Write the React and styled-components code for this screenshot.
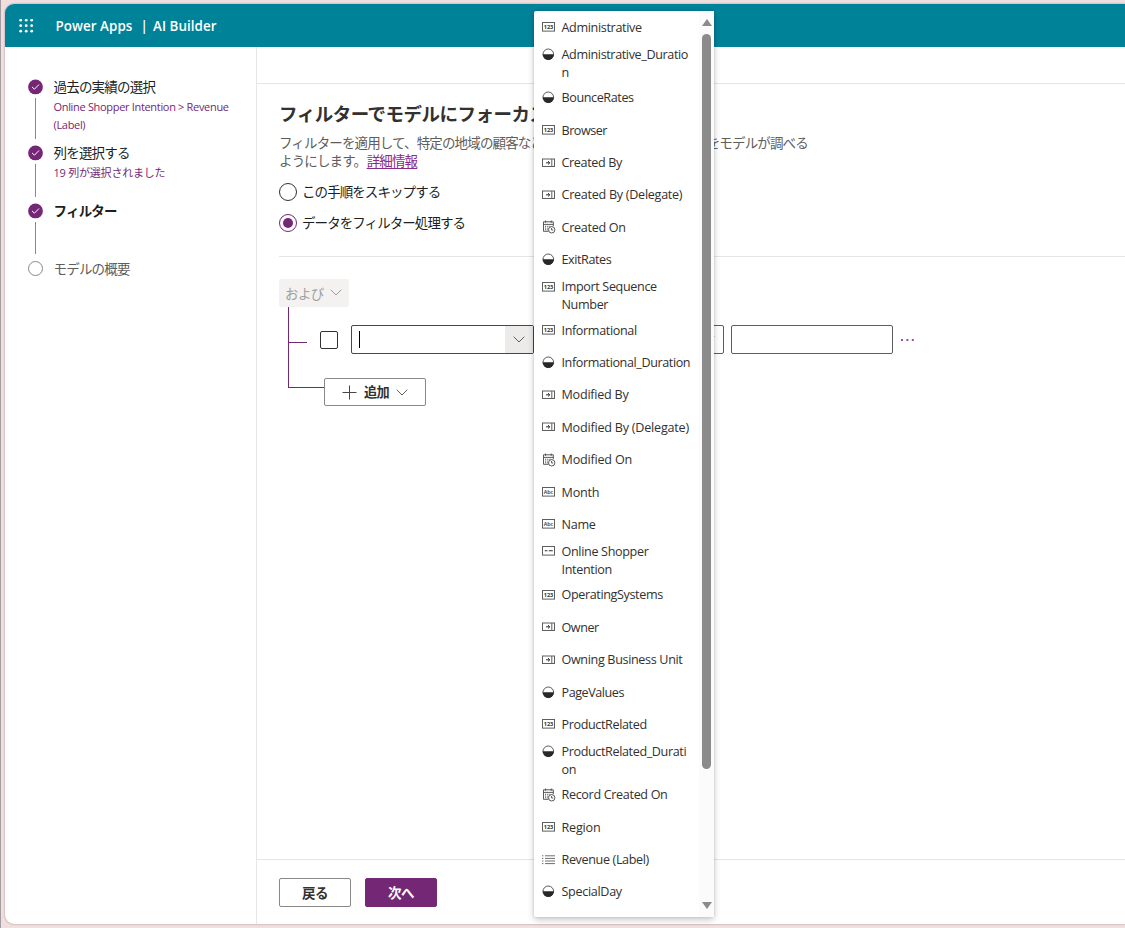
import React from "react";
import styled, { createGlobalStyle, css } from "styled-components";

const GlobalStyle = createGlobalStyle`
  *, *::before, *::after { box-sizing: border-box; }
  html, body { margin: 0; padding: 0; overflow: hidden; }
  body {
    font-family: "Open Sans", "Noto Sans CJK JP", sans-serif;
    color: #323130;
    background: #efdfde;
  }
`;

const Desktop = styled.div`
  width: 1125px;
  height: 928px;
  padding: 4px 0 4px 4px;
  border-left: 1px solid #a39ca3;
  background: #efdfde;
  overflow: hidden;
`;

const Window = styled.div`
  height: 920px;
  display: flex;
  flex-direction: column;
  background: #fff;
  border-radius: 9px 0 0 9px;
  overflow: hidden;
  box-shadow: 0 0 2px rgba(90, 50, 50, 0.5);
`;

const Header = styled.header`
  flex: none;
  height: 43px;
  display: flex;
  align-items: center;
  padding: 1px 0 0 14px;
  background: #008299;
  color: #fff;
`;

const Brand = styled.div`
  display: flex;
  margin-left: 21.5px;
  font-size: 13.4px;
  font-weight: 600;
  line-height: 20px;
  white-space: pre;
`;

const BrandPart = styled.span`
  width: ${(p) => p.$w}px;
  letter-spacing: 0.05px;
`;

const Body = styled.div`
  flex: 1;
  display: flex;
  min-height: 0;
`;

const Sidebar = styled.nav`
  width: 252px;
  flex: none;
  padding: 32px 0 0 23px;
  border-right: 1px solid #e6e6e6;
`;

const Step = styled.div`
  display: flex;
  height: ${(p) => p.$h}px;
`;

const Marker = styled.div`
  width: 15px;
  display: flex;
  flex-direction: column;
  align-items: center;
`;

const StepIcon = styled.svg`
  flex: none;
  width: 15px;
  height: 16px;
`;

const Connector = styled.div`
  width: 1px;
  height: ${(p) => p.$h}px;
  margin-top: 3px;
  background: #8a8886;
`;

const StepText = styled.div`
  margin-left: 10.5px;
  margin-top: -2px;
`;

const StepTitle = styled.div`
  font-size: 13.5px;
  line-height: 20px;
  letter-spacing: -0.8px;
  font-weight: ${(p) => (p.$current ? 700 : 400)};
  color: ${(p) => (p.$muted ? "#605e5c" : "#201f1e")};
  white-space: nowrap;
`;

const StepNote = styled.div`
  width: 190px;
  margin-top: 1px;
  font-size: 11px;
  line-height: 18px;
  letter-spacing: ${(p) => p.$track || 0}px;
  color: #742774;
  white-space: pre-line;
`;

const Main = styled.main`
  flex: 1;
  display: flex;
  flex-direction: column;
  min-width: 0;
`;

const CommandBar = styled.div`
  height: 37px;
  flex: none;
  border-bottom: 1px solid #e6e6e6;
`;

const Content = styled.section`
  flex: 1;
  padding: 18px 0 0 22px;
`;

const Title = styled.h1`
  margin: 0;
  font-size: 18.5px;
  line-height: 24px;
  font-weight: 700;
  letter-spacing: -0.5px;
  white-space: nowrap;
  color: #323130;
`;

const Description = styled.p`
  margin: 8px 0 0;
  font-size: 13.5px;
  line-height: 18px;
  letter-spacing: -0.86px;
  white-space: pre;
  color: #605e5c;
`;

const Link = styled.a`
  margin-left: 0.5px;
  color: #8a2a8a;
  text-decoration: underline;
  text-underline-offset: 2px;
`;

const Radio = styled.label`
  display: flex;
  align-items: center;
  height: 18px;
  margin-top: 13px;
  font-size: 13.5px;
  letter-spacing: -0.93px;
  white-space: nowrap;
  color: #201f1e;
`;

const RadioLabel = styled.span`
  padding-bottom: 2px;
`;

const RadioRing = styled.span`
  width: 18px;
  height: 18px;
  flex: none;
  display: grid;
  place-items: center;
  margin-right: 5px;
  border: 1px solid ${(p) => (p.$on ? "#742774" : "#323130")};
  border-radius: 50%;
`;

const RadioDot = styled.span`
  width: 10px;
  height: 10px;
  border-radius: 50%;
  background: #742774;
`;

const Divider = styled.div`
  height: 1px;
  margin-top: 24px;
  background: #e6e6e6;
`;

const AndButton = styled.button`
  display: flex;
  align-items: center;
  width: 70px;
  height: 28px;
  margin-top: 22px;
  padding: 0 0 1px 6px;
  gap: 6px;
  border: 0;
  border-radius: 2px;
  background: #f3f2f1;
  color: #a19f9d;
  font: 400 13.5px/20px "Noto Sans CJK JP", sans-serif;
  letter-spacing: -0.6px;
`;

const Tree = styled.div`
  display: flex;
  margin-left: 9px;
`;

const Rail = styled.div`
  width: 36px;
  flex: none;
`;

const Branch = styled.div`
  width: ${(p) => p.$w}px;
  height: ${(p) => p.$h}px;
  border: solid #742774;
  border-width: 0 0 1px 1px;
`;

const Condition = styled.div`
  display: flex;
  align-items: center;
  height: 29px;
  margin: 18px 0 24px -4px;
`;

const Checkbox = styled.span`
  width: 18px;
  height: 18px;
  margin-right: 13px;
  border: 1px solid #323130;
  border-radius: 2px;
`;

const Field = styled.div`
  display: flex;
  align-items: stretch;
  width: ${(p) => p.$w}px;
  height: 29px;
  margin-right: 7px;
  border: 1px solid ${(p) => (p.$focus ? "#742774" : "#605e5c")};
  border-radius: 2px;
  background: #fff;
`;

const Caret = styled.span`
  width: 1px;
  height: 17px;
  margin: 5px auto 0 7px;
  background: #000;
`;

const DropButton = styled.span`
  width: 28px;
  display: grid;
  place-items: center;
  background: ${(p) => (p.$shaded ? "#edebe9" : "transparent")};
  margin-left: auto;
`;

const buttonBase = css`
  display: flex;
  align-items: center;
  justify-content: center;
  border-radius: 2px;
  font: 700 13.5px/20px "Noto Sans CJK JP", sans-serif;
  letter-spacing: -0.6px;
`;

const AddButton = styled.button`
  ${buttonBase}
  width: 102px;
  height: 28px;
  padding: 0;
  gap: 7px;
  border: 1px solid #8a8886;
  background: #fff;
  color: #323130;
  font-size: 13.2px;
`;

const Footer = styled.footer`
  flex: none;
  display: flex;
  gap: 14px;
  height: 65px;
  padding: 18px 0 0 22px;
  border-top: 1px solid #e6e6e6;
`;

const FooterButton = styled.button`
  ${buttonBase}
  width: 72px;
  height: 29px;
  padding: 0 0 2px;
  border: 1px solid ${(p) => (p.$primary ? "#742774" : "#8a8886")};
  background: ${(p) => (p.$primary ? "#742774" : "#fff")};
  color: ${(p) => (p.$primary ? "#fff" : "#323130")};
`;

const Menu = styled.div`
  position: absolute;
  left: 534px;
  top: 11px;
  width: 180px;
  height: 906px;
  display: flex;
  background: #fff;
  border-radius: 2px;
  box-shadow: 0 3px 7px rgba(0, 0, 0, 0.2), 0 0 3px rgba(0, 0, 0, 0.16);
`;

const MenuList = styled.div`
  width: 165px;
  padding-left: 8px;
`;

const MenuItem = styled.div`
  display: flex;
  height: ${(p) => (p.$double ? 38 : 32.4)}px;
  padding-top: ${(p) => (p.$double ? 2.5 : 7.9)}px;
`;

const MenuIcon = styled.span`
  width: 14px;
  height: 17px;
  flex: none;
  display: grid;
  place-items: center start;
  margin-right: 5.5px;
`;

const MenuLabel = styled.span`
  font-size: 12.6px;
  line-height: 18px;
  letter-spacing: ${(p) => p.$track}px;
  white-space: pre;
  color: #323130;
`;

const Scrollbar = styled.div`
  width: 15px;
  display: flex;
  flex-direction: column;
  align-items: center;
  padding: 8px 0;
  background: #fbfbfb;
`;

const Thumb = styled.div`
  width: 9px;
  height: 735px;
  margin: 8px 0 auto;
  border-radius: 5px;
  background: #8b8b8b;
`;

const Arrow = styled.svg`
  width: 10px;
  height: 7px;
  flex: none;
  fill: #8b8b8b;
`;

const Waffle = () => (
  <svg width="15" height="15" viewBox="0 0 15 15" fill="#fff">
    {[1.2, 6.7, 12.2].map((y) =>
      [1.7, 7.2, 12.7].map((x) => <circle key={x + "-" + y} cx={x} cy={y} r="1.4" />)
    )}
  </svg>
);

const Chevron = ({ color = "#605e5c" }) => (
  <svg width="12" height="7" viewBox="0 0 12 7" fill="none" stroke={color}>
    <path d="M0.7 0.7 6 6 11.3 0.7" />
  </svg>
);

const StepCircle = ({ done }) => (
  <StepIcon viewBox="0 0 15 16">
    {done ? (
      <>
        <circle cx="7.5" cy="7.9" r="7.4" fill="#742774" />
        <path d="M4 7.9 6.4 10.2 11 5.5" fill="none" stroke="#fff" />
      </>
    ) : (
      <circle cx="7.5" cy="7.5" r="7" fill="#fff" stroke="#8a8886" />
    )}
  </StepIcon>
);

const IconBox = ({ children }) => (
  <svg width="14" height="10" viewBox="0 0 14 10">
    <rect x="0.5" y="0.5" width="12" height="8.6" fill="none" stroke="#605e5c" />
    {children}
  </svg>
);

const icons = {
  num: (
    <IconBox>
      <text x="6.5" y="6.9" textAnchor="middle" fontSize="5.6" fontWeight="700" fill="#323130">123</text>
    </IconBox>
  ),
  abc: (
    <IconBox>
      <text x="6.5" y="6.8" textAnchor="middle" fontSize="5.4" fontWeight="600" fill="#323130">Abc</text>
    </IconBox>
  ),
  name: (
    <IconBox>
      <path d="M2.8 4.8h2.6M6.8 4.8h4" stroke="#323130" strokeWidth="1.1" />
    </IconBox>
  ),
  lookup: (
    <svg width="14" height="10" viewBox="0 0 14 10" fill="none" stroke="#605e5c">
      <rect x="0.5" y="1" width="12" height="7.5" />
      <path d="M9.8 1v7.5" />
      <path d="M4 4.8h3.8M6 3.1 7.8 4.8 6 6.5" stroke="#323130" />
    </svg>
  ),
  half: (
    <svg width="14" height="13" viewBox="0 0 14 13">
      <circle cx="6.3" cy="6.3" r="5.3" fill="#fff" stroke="#484644" strokeWidth="0.9" />
      <path d="M0.7 6.3h11.2a5.6 5.6 0 0 1-11.2 0Z" fill="#292827" />
    </svg>
  ),
  date: (
    <svg width="14" height="14" viewBox="0 0 14 14" fill="none" stroke="#484644" strokeWidth="0.9">
      <path d="M6.5 11.3H1.5V1.8h9.8V6M1.5 4.4h9.8M3.6 0.5v2.3M9.2 0.5v2.3" />
      <path d="M3 6.3h1.2M5.2 6.3h1.2M7.4 6.3h1.2M3 8.1h1.2M5.2 8.1h1M3 9.8h1.2M5.2 9.8h.8" />
      <circle cx="9.7" cy="9.8" r="3.2" fill="#fff" />
      <path d="M9.6 8v2h1.6" />
    </svg>
  ),
  list: (
    <svg width="14" height="10" viewBox="0 0 14 10" stroke="#605e5c" strokeWidth="0.9">
      {[0.8, 3.4, 6, 8.6].map((y) => (
        <path key={y} d={`M0 ${y}h1.4M3 ${y}h10`} />
      ))}
    </svg>
  ),
};

// icon, label, letter spacing in px
const items = [
  ["num", "Administrative", -0.35],
  ["half", "Administrative_Duratio\nn", -0.38],
  ["half", "BounceRates", -0.4],
  ["num", "Browser", -0.48],
  ["lookup", "Created By", -0.38],
  ["lookup", "Created By (Delegate)", -0.28],
  ["date", "Created On", -0.3],
  ["half", "ExitRates", -0.42],
  ["num", "Import Sequence\nNumber", -0.36],
  ["num", "Informational", -0.37],
  ["half", "Informational_Duration", -0.4],
  ["lookup", "Modified By", -0.24],
  ["lookup", "Modified By (Delegate)", -0.22],
  ["date", "Modified On", -0.2],
  ["abc", "Month", -0.2],
  ["abc", "Name", -0.3],
  ["name", "Online Shopper\nIntention", -0.34],
  ["num", "OperatingSystems", -0.38],
  ["lookup", "Owner", -0.45],
  ["lookup", "Owning Business Unit", -0.35],
  ["half", "PageValues", -0.44],
  ["num", "ProductRelated", -0.38],
  ["half", "ProductRelated_Durati\non", -0.38],
  ["date", "Record Created On", -0.34],
  ["num", "Region", -0.2],
  ["list", "Revenue (Label)", -0.37],
  ["half", "SpecialDay", -0.32],
];

export default function App() {
  return (
    <>
      <GlobalStyle />
      <Desktop>
        <Window>
          <Header>
            <Waffle />
            <Brand>
              <BrandPart $w={85}>Power Apps</BrandPart>
              <BrandPart $w={12.5}>|</BrandPart>
              <BrandPart $w={70}>AI Builder</BrandPart>
            </Brand>
          </Header>
          <Body>
            <Sidebar>
              <Step $h={66}>
                <Marker><StepCircle done /><Connector $h={41} /></Marker>
                <StepText>
                  <StepTitle>過去の実績の選択</StepTitle>
                  <StepNote $track={-0.32}>{"Online Shopper Intention > Revenue\n(Label)"}</StepNote>
                </StepText>
              </Step>
              <Step $h={58}>
                <Marker><StepCircle done /><Connector $h={33} /></Marker>
                <StepText>
                  <StepTitle>列を選択する</StepTitle>
                  <StepNote $track={-0.22}>19 列が選択されました</StepNote>
                </StepText>
              </Step>
              <Step $h={58}>
                <Marker><StepCircle done /><Connector $h={32} /></Marker>
                <StepText>
                  <StepTitle $current>フィルター</StepTitle>
                </StepText>
              </Step>
              <Step $h={20}>
                <Marker><StepCircle /></Marker>
                <StepText>
                  <StepTitle $muted>モデルの概要</StepTitle>
                </StepText>
              </Step>
            </Sidebar>
            <Main>
              <CommandBar />
              <Content>
                <Title>フィルターでモデルにフォーカスを置く</Title>
                <Description>
                  {"フィルターを適用して、特定の地域の顧客など、特定の条件を満たすデータをモデルが調べる\nようにします。"}
                  <Link>詳細情報</Link>
                </Description>
                <Radio>
                  <RadioRing />
                  <RadioLabel>この手順をスキップする</RadioLabel>
                </Radio>
                <Radio>
                  <RadioRing $on><RadioDot /></RadioRing>
                  <RadioLabel>データをフィルター処理する</RadioLabel>
                </Radio>
                <Divider />
                <AndButton>および<Chevron color="#a19f9d" /></AndButton>
                <Tree>
                  <Rail>
                    <Branch $w={19} $h={36} />
                    <Branch $w={36} $h={45} />
                  </Rail>
                  <div>
                    <Condition>
                      <Checkbox />
                      <Field $w={183} $focus>
                        <Caret />
                        <DropButton $shaded><Chevron /></DropButton>
                      </Field>
                      <Field $w={183}><DropButton><Chevron /></DropButton></Field>
                      <Field $w={162} />
                      <svg width="15" height="4" viewBox="0 0 15 4" fill="#a04fa0">
                        <path d="M1 1h2v2H1zM6.4 1h2v2h-2zM11.8 1h2v2h-2z" />
                      </svg>
                    </Condition>
                    <AddButton>
                      <svg width="15" height="15" viewBox="0 0 15 15" stroke="#484644">
                        <path d="M7.5 0.5v14M0.5 7.5h14" />
                      </svg>
                      追加
                      <Chevron />
                    </AddButton>
                  </div>
                </Tree>
              </Content>
              <Footer>
                <FooterButton>戻る</FooterButton>
                <FooterButton $primary>次へ</FooterButton>
              </Footer>
            </Main>
          </Body>
        </Window>
      </Desktop>
      <Menu>
        <MenuList>
          {items.map(([icon, label, track]) => (
            <MenuItem key={label} $double={label.includes("\n")}>
              <MenuIcon>{icons[icon]}</MenuIcon>
              <MenuLabel $track={track}>{label}</MenuLabel>
            </MenuItem>
          ))}
        </MenuList>
        <Scrollbar>
          <Arrow viewBox="0 0 10 7"><path d="M5 0 10 7H0Z" /></Arrow>
          <Thumb />
          <Arrow viewBox="0 0 10 7"><path d="M0 0H10L5 7Z" /></Arrow>
        </Scrollbar>
      </Menu>
    </>
  );
}
